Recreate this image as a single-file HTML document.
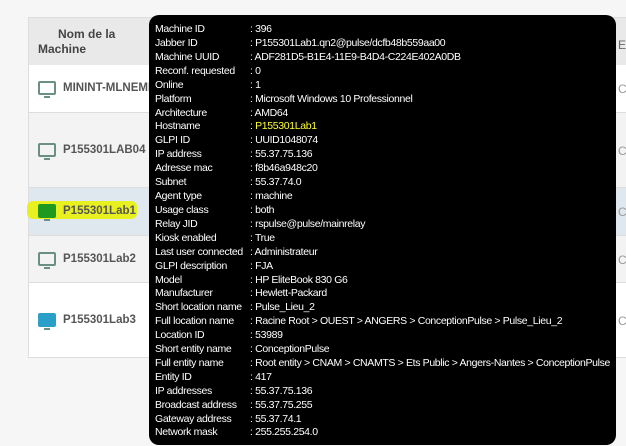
<!DOCTYPE html>
<html><head><style>
body{margin:0;width:626px;height:446px;background:#f6f6f6;font-family:"Liberation Sans",Arial,sans-serif;overflow:hidden;position:relative}
.tbl{position:absolute;left:28px;top:17px;width:610px;height:339px;background:#fff;border:1px solid #ddd}
.hdr{position:absolute;left:0;top:0;width:100%;height:47px;background:#e9e9e9;border-bottom:1px solid #ddd}
.hdr .t{position:absolute;left:9px;top:9px;font-weight:bold;font-size:12px;color:#444;line-height:15px;width:110px}
.row{position:absolute;left:0;width:100%;border-bottom:1px solid #ddd}
.row .n{position:absolute;left:34px;font-weight:bold;font-size:11.5px;color:#555}
.mon{position:absolute;left:9px;width:14px;height:10px;border:2px solid #6a8f84;border-radius:2px}
.mon:after{content:"";position:absolute;left:4px;bottom:-5px;width:6px;height:2px;background:#6a8f84}
.co{position:absolute;left:589px;font-size:12px;color:#999}
.tip{position:absolute;left:149px;top:15px;width:467px;height:430px;background:#000;border-radius:10px;color:#fff;font-size:10.5px;letter-spacing:-0.35px}
.tip div{position:absolute;left:6px;height:14px;line-height:14px;white-space:nowrap}
.tip span{position:absolute;left:95px}
.y{color:#ffff33}
</style></head><body>
<div class="tbl">
<div class="hdr"><div class="t">&nbsp;&nbsp;&nbsp;&nbsp;&nbsp;&nbsp;Nom de la<br>Machine</div><div class="co" style="top:20px;color:#666">En</div></div>
<div class="row" style="top:47px;height:47px;background:#fff"><div class="mon" style="top:16px"></div><div class="n" style="top:17px">MININT-MLNEMFA</div><div class="co" style="top:17px">C<b style="color:#a03">•</b></div></div>
<div class="row" style="top:95px;height:74px;background:#f3f3f3"><div class="mon" style="top:30px"></div><div class="n" style="top:31px">P155301LAB04</div><div class="co" style="top:31px">C<b style="color:#a03">•</b></div></div>
<div class="row" style="top:170px;height:47px;background:#dfe8ef"><div style="position:absolute;left:-2px;top:13px;width:110px;height:18px;background:#e8f020;border-radius:6px"></div><div class="mon" style="top:16px;background:#1f9a1f;border-color:#1f9a1f"></div><div class="n" style="top:17px">P155301Lab1</div><div class="co" style="top:17px">C<b style="color:#a03">•</b></div></div>
<div class="row" style="top:218px;height:46px;background:#f3f3f3"><div class="mon" style="top:16px"></div><div class="n" style="top:17px">P155301Lab2</div><div class="co" style="top:17px">C<b style="color:#a03">•</b></div></div>
<div class="row" style="top:265px;height:73px;background:#fff;border:none"><div class="mon" style="top:30px;background:#2aa0c8;border-color:#2aa0c8"></div><div class="n" style="top:31px">P155301Lab3</div><div class="co" style="top:31px">C<b style="color:#a03">•</b></div></div>
</div>
<div class="tip">
<div style="top:7px">Machine ID<span>: 396</span></div>
<div style="top:21px">Jabber ID<span>: P155301Lab1.qn2@pulse/dcfb48b559aa00</span></div>
<div style="top:35px">Machine UUID<span>: ADF281D5-B1E4-11E9-B4D4-C224E402A0DB</span></div>
<div style="top:49px">Reconf. requested<span>: 0</span></div>
<div style="top:63px">Online<span>: 1</span></div>
<div style="top:77px">Platform<span>: Microsoft Windows 10 Professionnel</span></div>
<div style="top:91px">Architecture<span>: AMD64</span></div>
<div style="top:104px">Hostname<span>: <i class="y" style="font-style:normal">P155301Lab1</i></span></div>
<div style="top:118px">GLPI ID<span>: UUID1048074</span></div>
<div style="top:132px">IP address<span>: 55.37.75.136</span></div>
<div style="top:146px">Adresse mac<span>: f8b46a948c20</span></div>
<div style="top:160px">Subnet<span>: 55.37.74.0</span></div>
<div style="top:174px">Agent type<span>: machine</span></div>
<div style="top:188px">Usage class<span>: both</span></div>
<div style="top:202px">Relay JID<span>: rspulse@pulse/mainrelay</span></div>
<div style="top:216px">Kiosk enabled<span>: True</span></div>
<div style="top:230px">Last user connected<span>: Administrateur</span></div>
<div style="top:244px">GLPI description<span>: FJA</span></div>
<div style="top:258px">Model<span>: HP EliteBook 830 G6</span></div>
<div style="top:271px">Manufacturer<span>: Hewlett-Packard</span></div>
<div style="top:285px">Short location name<span>: Pulse_Lieu_2</span></div>
<div style="top:299px">Full location name<span>: Racine Root &gt; OUEST &gt; ANGERS &gt; ConceptionPulse &gt; Pulse_Lieu_2</span></div>
<div style="top:313px">Location ID<span>: 53989</span></div>
<div style="top:327px">Short entity name<span>: ConceptionPulse</span></div>
<div style="top:341px">Full entity name<span>: Root entity &gt; CNAM &gt; CNAMTS &gt; Ets Public &gt; Angers-Nantes &gt; ConceptionPulse</span></div>
<div style="top:355px">Entity ID<span>: 417</span></div>
<div style="top:369px">IP addresses<span>: 55.37.75.136</span></div>
<div style="top:383px">Broadcast address<span>: 55.37.75.255</span></div>
<div style="top:397px">Gateway address<span>: 55.37.74.1</span></div>
<div style="top:410px">Network mask<span>: 255.255.254.0</span></div>
</div>
</body></html>
